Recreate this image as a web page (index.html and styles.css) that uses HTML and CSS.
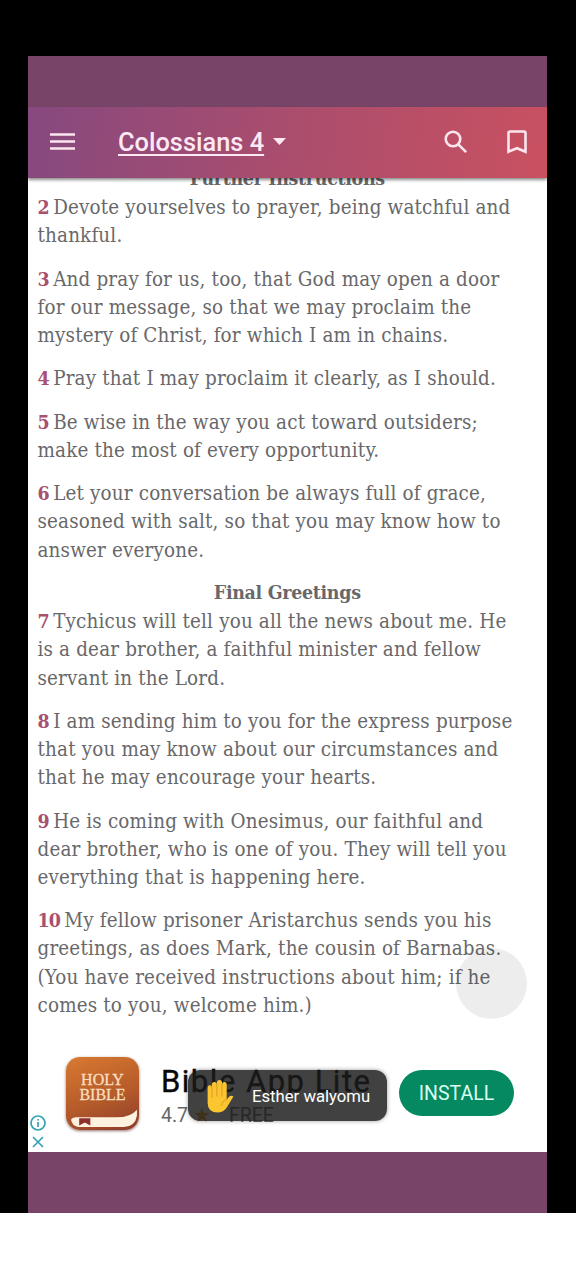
FILE: index.html
```html
<!DOCTYPE html>
<html lang="en">
<head>
	<meta charset="utf-8">
	<title>Colossians 4</title>
	<link rel="stylesheet" href="styles.css">
</head>
<body>
	<div class="phone">
		<div class="status-bar"></div>

		<header class="toolbar">
			<svg class="menu-icon" viewBox="0 0 26 18"><path d="M0 1.500h25M0 8.500h25M0 15.500h25"/></svg>
			<h1 class="chapter">Colossians 4</h1>
			<svg class="caret-icon" viewBox="0 0 13 7"><path d="M0 0h13L6.500 7z"/></svg>
			<svg class="search-icon" viewBox="0 0 24 24"><circle cx="9" cy="9" r="7.300"/><path d="M14.300 14.300l7.800 7.800"/></svg>
			<svg class="bookmark-icon" viewBox="0 0 20 24"><path d="M1.500 3Q1.500 1.500 3 1.500h14Q18.500 1.500 18.500 3v18.700L10 18.200l-8.500 3.500z"/></svg>
		</header>

		<main class="reader">
			<h2>Further Instructions</h2>
			<p><b>2</b> Devote yourselves to prayer, being watchful and<br>thankful.</p>
			<p><b>3</b> And pray for us, too, that God may open a door<br>for our message, so that we may proclaim the<br>mystery of Christ, for which I am in chains.</p>
			<p><b>4</b> Pray that I may proclaim it clearly, as I should.</p>
			<p><b>5</b> Be wise in the way you act toward outsiders;<br>make the most of every opportunity.</p>
			<p><b>6</b> Let your conversation be always full of grace,<br>seasoned with salt, so that you may know how to<br>answer everyone.</p>
			<h2>Final Greetings</h2>
			<p><b>7</b> Tychicus will tell you all the news about me. He<br>is a dear brother, a faithful minister and fellow<br>servant in the Lord.</p>
			<p><b>8</b> I am sending him to you for the express purpose<br>that you may know about our circumstances and<br>that he may encourage your hearts.</p>
			<p><b>9</b> He is coming with Onesimus, our faithful and<br>dear brother, who is one of you. They will tell you<br>everything that is happening here.</p>
			<p><b>10</b> My fellow prisoner Aristarchus sends you his<br>greetings, as does Mark, the cousin of Barnabas.<br>(You have received instructions about him; if he<br>comes to you, welcome him.)</p>
			<div class="float-button"></div>
		</main>

		<section class="ad">
			<div class="ad-marks">
				<svg viewBox="0 0 16 16"><circle cx="8" cy="8" r="7"/><path d="M8 7v5M8 4v1.500"/></svg>
				<svg viewBox="0 0 16 16"><path d="M3 3l10 10M13 3L3 13"/></svg>
			</div>
			<div class="app-icon">
				<span>HOLY<br>BIBLE</span>
				<svg viewBox="0 0 72 72">
					<path class="pages" d="M5 62Q6 59.500 10 59.500H50Q64 59.500 70 52V58Q68 69 57 69H12Q6 68 5 62z"/>
					<path class="ribbon" d="M13 60.500h11v7l-5.500-3-5.500 3z"/>
				</svg>
			</div>
			<div class="ad-text">
				<div class="ad-title">Bible App Lite</div>
				<div class="ad-info">4.7 <span class="star">★</span><span class="price">FREE</span></div>
			</div>
			<button class="install">INSTALL</button>
			<div class="toast">
				<svg viewBox="0 0 26 32">
					<path class="hand" d="M1 8Q1 5 3 5T5 8V5Q5 2 7.500 2T10 5V3Q10 0 12.500 0T15 3V5Q15 2 17.300 2T19.500 5V19L22 16Q24 14.500 26 16L20 26Q17 31.500 11 31.500Q1 31.500 1 22z"/>
					<path class="fingers" d="M5.200 7v10M10 4v12M14.900 4v12M19.500 19Q15 20 14.500 25"/>
				</svg>
				<span>Esther walyomu</span>
			</div>
		</section>

		<div class="nav-bar"></div>
	</div>
</body>
</html>
```

FILE: styles.css
```css
* {
	box-sizing: border-box;
}
body {
	margin: 0;
	background-color: #fff;
	font-family: Roboto, sans-serif;
}
.phone {
	display: flex;
	flex-direction: column;
	height: 1213px;
	padding: 56px 29px 0 28px;
	background-color: #000;
}
.status-bar {
	flex: none;
	height: 51px;
	background-color: #784568;
}
.toolbar {
	position: relative;
	z-index: 1;
	display: flex;
	flex: none;
	align-items: center;
	height: 71px;
	padding: 0 20px 2px 22px;
	background: linear-gradient(100deg, #86497f, #a94d6e 48%, #c95160);
	box-shadow: 0 2px 3px rgba(0,0,0,0.45);
}
.toolbar svg {
	fill: none;
	stroke: #fbe6f0;
	stroke-width: 2.6;
}
.menu-icon {
	width: 26px;
	height: 18px;
}
.chapter {
	margin: 1px 0 0 42px;
	color: #fde9f5;
	font-size: 25.4px;
	font-weight: 500;
	line-height: 32px;
	text-decoration: underline;
	text-decoration-thickness: 2px;
	text-underline-offset: 3px;
	text-decoration-skip-ink: none;
}
.toolbar .caret-icon {
	width: 13px;
	height: 7px;
	margin-left: 9px;
	fill: #fde9f5;
	stroke: none;
}
.search-icon {
	width: 24px;
	height: 24px;
	margin-left: auto;
}
.bookmark-icon {
	width: 20px;
	height: 24px;
	margin-left: 39px;
}
.reader {
	position: relative;
	flex: none;
	height: 861px;
	margin-top: -13px;
	padding: 0 10px 0 9.5px;
	background-color: #fff;
	color: #68686a;
	font-family: "Roboto Slab", "DejaVu Serif", serif;
	font-size: 20.4px;
	font-stretch: condensed;
	line-height: 28.2px;
	letter-spacing: 0.17px;
	white-space: nowrap;
}
.reader h2 {
	margin: 0;
	font-size: 19.4px;
	font-weight: bold;
	line-height: 28.2px;
	letter-spacing: -0.3px;
	text-align: center;
}
.reader p {
	margin: 0 0 15.1px;
}
.reader b {
	margin-right: -1.5px;
	color: #a8506f;
	font-size: 19.4px;
	line-height: 1;
	letter-spacing: -1px;
}
.float-button {
	position: absolute;
	right: 20px;
	top: 783px;
	width: 71px;
	height: 71px;
	border-radius: 50%;
	background-color: rgba(0,0,0,0.07);
}
.ad {
	position: relative;
	display: flex;
	flex: none;
	height: 126px;
	background-color: #fff;
}
.ad-marks {
	display: flex;
	flex-direction: column;
	gap: 3px;
	width: 38px;
	padding: 89px 0 0 2px;
}
.ad-marks svg {
	width: 16px;
	height: 16px;
	fill: none;
	stroke: #35a3b5;
	stroke-width: 1.7;
}
.app-icon {
	position: relative;
	width: 73px;
	height: 73px;
	margin-top: 31px;
	padding-top: 15px;
	border-radius: 14px;
	background: linear-gradient(160deg, #d87a30, #b65b2a 55%, #8c3c2c);
	box-shadow: 0 1px 3px rgba(70,20,20,0.6);
	color: #f9dfc0;
	font-family: "Liberation Serif", serif;
	font-size: 16px;
	line-height: 15px;
	text-align: center;
	-webkit-text-stroke: 0.3px #f9dfc0;
}
.app-icon svg {
	position: absolute;
	left: 0;
	top: 0;
	width: 73px;
	height: 73px;
}
.pages {
	fill: #fff1df;
}
.ribbon {
	fill: #8d302d;
}
.ad-text {
	margin: 38px 0 0 22px;
	white-space: nowrap;
}
.ad-title {
	color: #080808;
	font-size: 31px;
	line-height: 35px;
	letter-spacing: 1.5px;
	-webkit-text-stroke: 0.4px #080808;
}
.ad-info {
	color: #666;
	font-size: 19.5px;
	line-height: 33px;
}
.star {
	display: inline-block;
	width: 36px;
	color: #eea11e;
	font-size: 20px;
	line-height: 20px;
}
.install {
	width: 115px;
	height: 46px;
	margin: 44px 33px 0 auto;
	padding: 0;
	border: none;
	border-radius: 23px;
	background-color: #058961;
	color: #d9fff1;
	font-family: Roboto, sans-serif;
	font-size: 19.5px;
}
.toast {
	position: absolute;
	left: 160px;
	top: 44px;
	display: flex;
	align-items: center;
	width: 199px;
	height: 51px;
	padding: 2px 0 0 18px;
	border-radius: 12px;
	background-color: rgba(27,27,27,0.83);
	box-shadow: 0 0 4px rgba(0,0,0,0.4);
	color: #fff;
	font-size: 16.7px;
}
.toast svg {
	width: 28px;
	height: 33px;
	margin-right: 18px;
}
.hand {
	fill: #fbc52f;
}
.fingers {
	fill: none;
	stroke: #dd9425;
	stroke-width: 0.9;
}
.nav-bar {
	flex: 1;
	background-color: #784568;
}
```
